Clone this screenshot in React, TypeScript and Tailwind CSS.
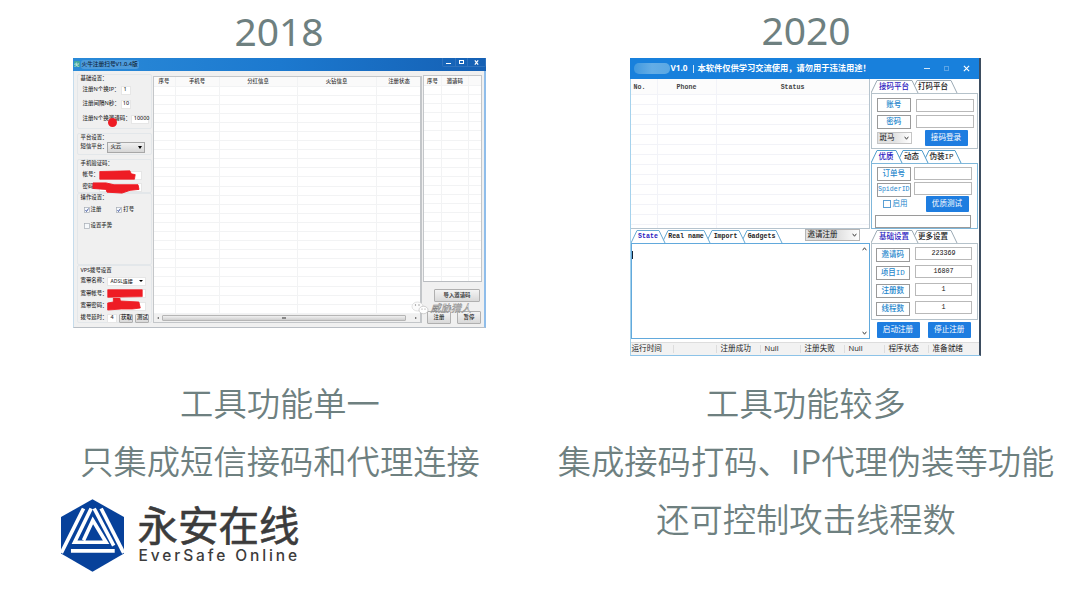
import React from "react";

type Kids = { children?: React.ReactNode; className?: string };

const Group = ({ children, className = "" }: Kids) => (
  <div className={`flex flex-col rounded-[2px] border border-[#e3e7ea] pl-[3px] ${className}`}>{children}</div>
);
const Row = ({ children, className = "" }: Kids) => (
  <div className={`flex shrink-0 items-center whitespace-nowrap ${className}`}>{children}</div>
);
const Field = ({ children, className = "" }: Kids) => (
  <span className={`flex h-[9px] items-center border border-[#e6e6e6] bg-white pl-[2px] ${className}`}>{children}</span>
);
const GreyButton = ({ children, className = "" }: Kids) => (
  <button className={`flex items-center justify-center whitespace-nowrap rounded-[1px] border border-[#b0b0b0] bg-gradient-to-b from-[#f4f4f4] to-[#d8d8d8] text-[#222] ${className}`}>
    {children}
  </button>
);
const Check = ({ on }: { on?: boolean }) => (
  <svg viewBox="0 0 12 12" className="mr-[1px] size-[6px]">
    <rect x="1" y="1" width="10" height="10" fill="#f5f8fb" stroke="#a6adb5" strokeWidth="1.4" />
    {on && <path d="M3 6l2 3 4-6" fill="none" stroke="#3a4f9c" strokeWidth="1.8" />}
  </svg>
);
const Scribble = ({ d, className = "" }: { d: string; className?: string }) => (
  <svg viewBox="0 0 48 13" preserveAspectRatio="none" className={`absolute ${className}`}>
    <path d={d} fill="#ee1c24" stroke="#ee1c24" strokeLinejoin="round" />
  </svg>
);

function Grid({ cols, labels, rows, rowClass, headClass, line }: { cols: string[]; labels: string[]; rows: number; rowClass: string; headClass: string; line: string }) {
  return (
    <div className="flex min-h-0 flex-1 overflow-hidden bg-white">
      {cols.map((c, i) => (
        <div key={i} className={`flex shrink-0 flex-col border-r ${line} ${c}`}>
          <div className={`flex shrink-0 items-center whitespace-nowrap border-b ${line} ${headClass}`}>{labels[i]}</div>
          {Array.from({ length: rows }, (_, r) => (
            <div key={r} className={`shrink-0 border-b ${line} ${rowClass}`} />
          ))}
        </div>
      ))}
    </div>
  );
}

function OldWindow() {
  return (
    <div className="relative flex h-[269.5px] w-[413px] flex-col border-b border-r-[2px] border-l border-b-[#b9bec4] border-l-[#c6dcec] border-r-[#8fbdea] bg-[#f0f0f0] text-[5.4px] leading-none font-medium text-[#333]">
      <div className="-mr-[2px] -ml-px flex h-[12.5px] shrink-0 items-center bg-gradient-to-r from-[#2a8ad8] via-[#1c79cf] to-[#1560b4]">
        <span className="ml-[1px] size-[6px] rounded-[1px] bg-[#3fa7a0] text-center text-[5px] leading-[6px] text-white">火</span>
        <span className="ml-[1px] flex h-[9px] items-center whitespace-nowrap rounded-[3px] bg-[#4d9bdb] px-[1px] pt-px text-[5.7px] text-[#10253c]">火牛注册扫号V1.0.4版</span>
        <div className="ml-auto flex h-[9px] w-[44px] self-start rounded-b-[2px] border border-t-0 border-[#2f72bd] text-white">
          <span className="flex w-[13px] items-center justify-center border-r border-[#2f72bd]"><i className="mt-[3px] h-[1.5px] w-[5px] bg-white" /></span>
          <span className="flex w-[12px] items-center justify-center border-r border-[#2f72bd]"><i className="h-[4px] w-[5px] border border-white" /></span>
          <span className="flex flex-1 items-center justify-center">
            <svg viewBox="0 0 6 6" className="size-[5px]"><path d="M1 .5l4 5M5 .5l-4 5" stroke="#fff" strokeWidth="1.4" /></svg>
          </span>
        </div>
      </div>
      <div className="flex min-h-0 flex-1">
        <div className="flex w-[78px] shrink-0 flex-col pt-[3.5px] pl-[3px]">
          <Group className="h-[55px]">
            <Row className="h-[8px]">基础设置：</Row>
            <Row className="h-[14px] pl-[2px] text-[5.5px]">注册N个换IP：<Field className="ml-px w-[10px]">1</Field></Row>
            <Row className="h-[14px] pl-[2px] text-[5.5px]">注册间隔N秒：<Field className="ml-px w-[10px] pl-px">10</Field></Row>
            <Row className="relative h-[16px] pl-[2px] text-[5.5px]">
              注册N个换邀请码：<Field className="w-[18px] pl-0">10000</Field>
              <i className="absolute top-[7px] left-[27px] size-[9px] rounded-full bg-[#ee1c24]" />
            </Row>
          </Group>
          <Group className="mt-[4px] h-[22px]">
            <Row className="h-[7px]">平台设置：</Row>
            <Row className="h-[12px]">
              短信平台：
              <span className="flex h-[11px] w-[38px] items-center justify-between border border-[#a7a7a7] bg-gradient-to-b from-[#f1f1f1] to-[#d6d6d6] px-[2px]">
                火云<i className="border-x-[2px] border-t-[3px] border-x-transparent border-t-black" />
              </span>
            </Row>
          </Group>
          <Group className="mt-[4px] h-[34px]">
            <Row className="h-[7px]">手机验证码：</Row>
            <Row className="relative h-[16px] pl-[2px]">
              帐号：<Field className="w-[43px]" />
              <Scribble className="top-[3px] left-[18px] h-[10px] w-[37px]" d="M1 2L40 1L42 5L47 6L46 12L1 12Z" />
            </Row>
            <Row className="relative h-[8px] pl-[2px]">
              密码：<Field className="w-[43px]" />
              <Scribble className="-top-px left-[11px] h-[12px] w-[48px]" d="M1 1L14 1L22 3L46 3L47 8L38 9L30 12L15 11L14 8L1 7Z" />
            </Row>
          </Group>
          <Group className="h-[72px]">
            <Row className="h-[7px]">操作设置：</Row>
            <Row className="h-[18px] pl-[3px]"><Check on />注册<span className="w-[15px]" /><Check on />打号</Row>
            <Row className="h-[14px] pl-[3px]"><Check />设置手势</Row>
          </Group>
          <Group className="h-[58px]">
            <Row className="h-[9px]">VPS拨号设置</Row>
            <Row className="h-[12px]">
              宽带名称：<Field className="w-[39px] justify-between pr-[2px] pl-0 text-[5px]">ADSL连接<i className="border-x-[2px] border-t-[2px] border-x-transparent border-t-black" /></Field>
            </Row>
            <Row className="relative h-[13px]">
              宽带帐号：<Field className="w-[39px]" />
              <Scribble className="top-[2px] left-[26px] h-[9px] w-[36px]" d="M1 1L47 1L47 11L1 12Z" />
            </Row>
            <Row className="relative h-[12px]">
              宽带密码：<Field className="w-[39px]" />
              <Scribble className="-top-[2px] left-[26px] h-[13px] w-[34px]" d="M9 0L18 0L19 3L45 4L47 10L36 11L20 11L1 12L1 5L9 4Z" />
            </Row>
            <Row className="h-[12px]">
              拨号延时：<Field className="h-[8px] w-[10px] pl-0">4</Field>
              <GreyButton className="ml-[2px] h-[9px] w-[14px]">获取</GreyButton>
              <GreyButton className="ml-[2px] h-[9px] w-[14px]">测试</GreyButton>
            </Row>
          </Group>
        </div>
        <div className="mt-[5px] ml-[1px] flex h-[247px] w-[269.5px] shrink-0 flex-col border border-r-[2px] border-[#c3c6c9]">
          <div className="relative flex min-h-0 flex-1">
            <Grid
              cols={["w-[22px]", "w-[44px]", "w-[78px]", "w-[79px]", "w-[46px]"]}
              labels={["序号", "手机号", "分红信息", "火钻信息", "注册状态"]}
              rows={26}
              rowClass="h-[9.1px]"
              headClass="h-[10px] justify-center bg-[#fafafa] pt-[2px]"
              line="border-[#f2f3f4]"
            />
          </div>
          <div className="flex h-[8px] shrink-0 items-center bg-[#f0f0f0] px-[3px]">
            <i className="border-y-[1.5px] border-r-[2px] border-y-transparent border-r-[#555]" />
            <span className="ml-[3px] flex h-[6px] w-[244px] items-center justify-center rounded-[1px] border border-[#b5b5b5] bg-gradient-to-b from-[#f0f0f0] to-[#cfcfcf]">
              <i className="h-[2px] w-[4px] border-y border-[#888]" />
            </span>
            <i className="ml-auto border-y-[1.5px] border-l-[2px] border-y-transparent border-l-[#555]" />
          </div>
        </div>
        <div className="mt-[4.5px] ml-[1px] flex w-[59px] shrink-0 flex-col">
          <div className="flex h-[207px] border border-b-[#b9bcc0] border-[#c3c6c9]">
            <Grid
              cols={["w-[18px]", "w-[26.5px]", "w-[13px]"]}
              labels={["序号", "邀请码", ""]}
              rows={22}
              rowClass="h-[9.1px]"
              headClass="h-[10px] justify-center bg-[#fafafa] pt-[2px]"
              line="border-[#f2f3f4]"
            />
          </div>
          <GreyButton className="mt-[6.5px] ml-[11px] h-[13.5px] w-[46px]">导入邀请码</GreyButton>
          <div className="mt-[9px] flex gap-[6px] pl-[4px]">
            <GreyButton className="h-[13px] w-[24px]">注册</GreyButton>
            <GreyButton className="h-[13px] w-[24px]">暂停</GreyButton>
          </div>
        </div>
      </div>
      <div className="absolute top-[243px] left-[337px] flex items-center whitespace-nowrap">
        <svg viewBox="0 0 36 28" className="h-[14px] w-[18px]">
          <ellipse cx="13" cy="11" rx="11" ry="9" fill="#fbfbfb" stroke="#c5c5c5" />
          <ellipse cx="25" cy="18" rx="9" ry="7.5" fill="#fff" stroke="#a5a5a5" />
          <g fill="#888"><circle cx="9" cy="8" r="1.3" /><circle cx="16" cy="8" r="1.3" /><circle cx="22" cy="16" r="1.2" /><circle cx="28" cy="16" r="1.2" /></g>
        </svg>
        <span className="ml-[2px] text-[10.2px] leading-none font-normal text-[#f4f4f4] italic [-webkit-text-stroke:0.4px_#808080]">威胁猎人</span>
      </div>
    </div>
  );
}

/* Tab strip: every tab is a trapezoid whose outline sits behind its label. */
function Tabs({ labels, widths, starts, total, color, className = "" }: { labels: string[]; widths: string[]; starts: number[][]; total: number; color: string; className?: string }) {
  return (
    <div className={`relative flex h-[13px] shrink-0 items-center whitespace-nowrap ${className}`}>
      <svg viewBox={`0 0 ${total} 13`} width={total} height="13" className="absolute top-0 left-0">
        {starts.map(([a, b], i) => (
          <path key={i} d={`M${a} 13L${a + 6} .5H${b - 6}L${b} 13`} fill="#fff" stroke={color} strokeWidth="1" />
        ))}
      </svg>
      {labels.map((l, i) => (
        <span key={l} className={`relative flex shrink-0 justify-center pt-[2px] ${i === 0 ? "text-[#2a20c0]" : "text-[#222]"} ${widths[i]}`}>{l}</span>
      ))}
    </div>
  );
}

const Label = ({ children, className = "text-[7.5px]" }: Kids) => (
  <span className={`flex h-[14px] w-[34.5px] shrink-0 items-center justify-center border border-[#9a9a9a] pt-[2px] font-medium text-[#2486cc] ${className}`}>{children}</span>
);
const Box = ({ children, className = "" }: Kids) => (
  <span className={`flex h-[13px] items-center justify-center border bg-white text-[6.7px] text-[#111] ${className}`}>{children}</span>
);
const Blue = ({ children, className = "" }: Kids) => (
  <button className={`flex h-[16px] items-center justify-center whitespace-nowrap rounded-[1px] bg-[#1e7de0] pt-[2px] text-[7.6px] text-white ${className}`}>{children}</button>
);
const Chevron = ({ up }: { up?: boolean }) => (
  <svg viewBox="0 0 8 6" className="h-[4px] w-[5px]">
    <path d={up ? "M1 5l3-4 3 4" : "M1 1l3 4 3-4"} fill="none" stroke="#444" strokeWidth="1.6" />
  </svg>
);

function NewWindow() {
  return (
    <div className="flex h-[298px] w-[351px] flex-col border-r-[2px] border-b border-l border-r-[#3d4d60] border-b-[#8cc3e8] border-l-[#a5d2ec] bg-white font-['Liberation_Mono','Noto_Sans_CJK_SC',monospace] text-[7.5px] leading-none">
      <div className="-ml-px flex h-[21px] shrink-0 items-center bg-[#1880dc] font-['Open_Sans','Noto_Sans_CJK_SC',sans-serif] text-white">
        <span className="ml-[4px] h-[11px] w-[36px] rounded-[5px] bg-gradient-to-r from-[#3f98df] via-[#64ade6] to-[#5aa8e4]" />
        <span className="ml-px text-[8.2px] font-bold whitespace-nowrap">V1.0</span>
        <span className="ml-[5px] h-[8px] w-px bg-white/80" />
        <span className="ml-[4px] text-[8.25px] font-bold whitespace-nowrap">本软件仅供学习交流使用，请勿用于违法用途！</span>
        <div className="mr-[9px] ml-auto flex items-center gap-[14px]">
          <i className="h-px w-[6px] bg-white/80" />
          <i className="size-[5px] border border-[#5ba4e6]" />
          <svg viewBox="0 0 8 8" className="size-[7px]"><path d="M1 1l6 6M7 1l-6 6" stroke="#fff" strokeWidth="1.3" /></svg>
        </div>
      </div>
      <div className="flex h-[262.5px] shrink-0">
        <div className="flex w-[239px] shrink-0 flex-col">
          <div className="flex h-[149.5px] shrink-0 border-r border-b border-[#b6c4ce] font-['Liberation_Mono',monospace] text-[6.6px] font-bold text-[#444]">
            <Grid
              cols={["w-[27px]", "w-[59px]", "w-[153px]"]}
              labels={["No.\u00a0\u00a0", "Phone", "Status"]}
              rows={14}
              rowClass="h-[10px]"
              headClass="h-[16px] justify-center bg-[#fcfcfc] pt-[3px]"
              line="border-[#f2f3f8]"
            />
          </div>
          <div className="flex h-[14px] shrink-0 items-end justify-between">
            <Tabs
              className="text-[6.6px] font-bold"
              labels={["State", "Real name", "Import", "Gadgets"]}
              widths={["w-[35px]", "w-[41px]", "w-[38px]", "w-[34px]"]}
              starts={[[110, 151], [75, 114], [31, 79], [0, 34]]}
              total={152}
              color="#67a9d3"
            />
            <span className="mr-[10px] mb-[2px] flex h-[12px] w-[55px] items-center justify-between border border-[#b5b5b5] bg-gradient-to-r from-[#e2e2e2] via-[#d8d8d8] to-white px-[2px] text-[#111]">
              <span className="pt-[2px]">邀请注册</span><Chevron />
            </span>
          </div>
          <div className="flex h-[96px] shrink-0 justify-between border border-[#62a9dc]">
            <i className="mt-[7px] h-[8px] w-[1.5px] bg-[#123]" />
            <div className="flex w-[9px] flex-col items-center justify-between py-[3px]"><Chevron up /><Chevron /></div>
          </div>
        </div>
        <div className="flex w-[108px] shrink-0 flex-col pl-[1px]">
          <Tabs className="mt-[1px] font-medium" labels={["接码平台", "打码平台"]} widths={["w-[47px]", "w-[31px]"]} starts={[[40, 86], [0, 47]]} total={88} color="#9dabb5" />
          <div className="flex h-[56px] shrink-0 flex-col border border-[#b5c2ca] pt-[4px] pl-[5px]">
            <div className="flex h-[14px] items-center gap-[4.5px]"><Label>账号</Label><Box className="w-[58px] border-[#b9b9b9]" /></div>
            <div className="mt-[2.5px] flex h-[14px] items-center gap-[4.5px]"><Label>密码</Label><Box className="w-[58px] border-[#b9b9b9]" /></div>
            <div className="mt-[1px] flex h-[16px] items-center">
              <span className="flex h-[12px] w-[35px] items-center justify-between border border-[#c5c5c5] bg-gradient-to-r from-[#e2e2e2] via-[#e2e2e2] to-white px-[2px] text-[#111]"><span className="pt-[2px]">斑马</span><Chevron /></span>
              <Blue className="ml-[13px] w-[43px]">接码登录</Blue>
            </div>
          </div>
          <Tabs className="mt-[1px] font-medium" labels={["优质", "动态", "伪装IP"]} widths={["w-[31px]", "w-[20px]", "w-[40px]"]} starts={[[52, 90], [26, 57], [0, 31]]} total={92} color="#4f9ccb" />
          <div className="flex h-[65.5px] shrink-0 flex-col border border-[#7fb7da] pt-[3px] pl-[5px]">
            <div className="flex h-[14px] items-center gap-[3px]"><Label>订单号</Label><Box className="mb-px w-[58px] border-[#b9b9b9]" /></div>
            <div className="mt-[1.5px] flex h-[14px] items-center gap-[3px]"><Label className="text-[6.6px]">SpiderID</Label><Box className="mb-[3px] w-[58px] border-[#b9b9b9]" /></div>
            <div className="flex h-[15px] items-center text-[#2486cc]">
              <i className="ml-[6px] size-[8px] border border-[#5a9fd4]" />
              <span className="ml-[2px] pt-[2px]">启用</span>
              <Blue className="ml-[18px] w-[43px]">优质测试</Blue>
            </div>
            <Box className="mt-[3px] -ml-[2px] h-[11px] w-[96px] border-[#9a9a9a]" />
          </div>
          <Tabs className="mt-[1.5px] font-medium" labels={["基础设置", "更多设置"]} widths={["w-[47px]", "w-[31px]"]} starts={[[40, 86], [0, 47]]} total={88} color="#9dabb5" />
          <div className="flex h-[77px] shrink-0 flex-col gap-[4px] border border-[#b5c2ca] pt-[3.5px] pl-[4px]">
            {[["邀请码", "223369"], ["项目ID", "16807"], ["注册数", "1"], ["线程数", "1"]].map(([k, v]) => (
              <div key={k} className="flex h-[14px] shrink-0 items-center gap-[5px]"><Label>{k}</Label><Box className="mb-[2px] w-[57px] border-[#b9b9b9]">{v}</Box></div>
            ))}
          </div>
          <div className="mt-[1.5px] flex gap-[8px] pl-[6px]"><Blue className="w-[43px]">启动注册</Blue><Blue className="w-[43.5px]">停止注册</Blue></div>
        </div>
      </div>
      <div className="flex flex-1 items-center border-t border-[#ddd] bg-[#f2f2f2] pt-px font-['Open_Sans','Noto_Sans_CJK_SC',sans-serif] text-[7.6px] whitespace-nowrap text-[#222]">
        <span className="w-[43px] border-r border-[#ddd] pl-px">运行时间</span>
        <span className="w-[43px] border-r border-[#ddd]">&nbsp;</span>
        <span className="w-[44px] border-r border-[#ddd] pl-[4px]">注册成功</span>
        <span className="w-[40px] border-r border-[#ddd] pl-[4px]">Null</span>
        <span className="w-[44px] border-r border-[#ddd] pl-[4px]">注册失败</span>
        <span className="w-[40px] border-r border-[#ddd] pl-[4px]">Null</span>
        <span className="w-[44px] border-r border-[#ddd] pl-[4px]">程序状态</span>
        <span className="pl-[4px]">准备就绪</span>
      </div>
    </div>
  );
}

const Logo = () => (
  <svg viewBox="12 10 190 219" className="h-[73px] w-[63px] shrink-0">
    <path d="M107 10L202 64V174L107 229L12 174V64Z" fill="#07419a" />
    <g fill="none" stroke="#fff" strokeWidth="11">
      <path d="M80 38L13 172" />
      <path d="M103 38L53 140H148L108 74L80 134" />
      <path d="M112 38L171 150" />
      <path d="M133 38L201 172" />
      <path d="M42 166H174" />
    </g>
  </svg>
);

export default function App() {
  return (
    <div className="flex h-[607px] w-[1080px] overflow-hidden bg-white font-['Noto_Sans','Noto_Sans_CJK_SC',sans-serif] text-[#6e8080]">
      <section className="flex w-[540px] shrink-0 flex-col">
        <h1 className="h-[58px] w-[558px] pt-[11px] text-center text-[39px] leading-[40px]">2018</h1>
        <div className="h-[314.5px] pl-[72.5px]"><OldWindow /></div>
        <div className="w-[560px] text-center font-['Noto_Sans_CJK_SC',sans-serif] text-[33.3px] leading-[58px] font-[350]">
          <p>工具功能单一</p>
          <p>只集成短信接码和代理连接</p>
        </div>
        <div className="mt-[10.5px] flex pl-[60.5px]">
          <Logo />
          <div className="ml-[14px] flex flex-col text-[#3c3c3c]">
            <span className="mt-[3px] font-['Noto_Sans_CJK_SC',sans-serif] text-[40.5px] leading-[44px] font-normal [-webkit-text-stroke:0.6px_#3c3c3c]">永安在线</span>
            <span className="mt-px pl-[1px] font-['Inter',sans-serif] text-[15.5px] leading-[18px] font-medium tracking-[2.9px] whitespace-nowrap">EverSafe Online</span>
          </div>
        </div>
      </section>
      <section className="flex w-[540px] shrink-0 flex-col">
        <h1 className="h-[58px] w-[532px] pt-[10px] text-center text-[39px] leading-[40px]">2020</h1>
        <div className="h-[314.5px] pl-[89.5px]"><NewWindow /></div>
        <div className="w-[532px] text-center font-['Noto_Sans_CJK_SC',sans-serif] text-[33.3px] leading-[58px] font-[350] whitespace-nowrap">
          <p>工具功能较多</p>
          <p>集成接码打码、IP代理伪装等功能</p>
          <p>还可控制攻击线程数</p>
        </div>
      </section>
    </div>
  );
}
